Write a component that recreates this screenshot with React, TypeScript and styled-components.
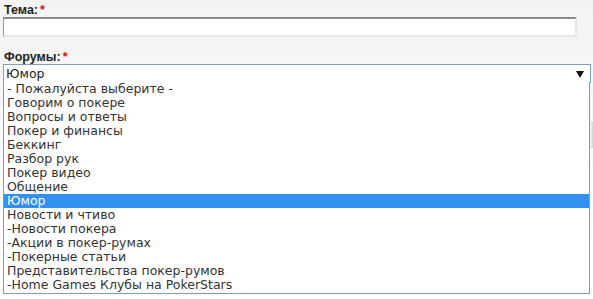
import styled, { createGlobalStyle } from "styled-components"

const GlobalStyle = createGlobalStyle`
  html, body {
    margin: 0;
    padding: 0;
  }
  body {
    width: 593px;
    height: 299px;
    overflow: hidden;
    background: linear-gradient(#f3f3f3, #fbfbfb 60%, #ffffff);
    font-family: "DejaVu Sans", Verdana, sans-serif;
  }
`

const Page = styled('div')`
  display: flex;
  flex-direction: column;
  padding: 3px 0 0 3px;
  width: 593px;
  height: 299px;
  box-sizing: border-box;
`

const Field = styled('div')`
  display: flex;
  flex-direction: column;
  margin-bottom: 13px;
`

const Label = styled('label')`
  font-family: "Liberation Sans", Tahoma, sans-serif;
  font-weight: bold;
  font-size: 12.5px;
  line-height: 14px;
  color: #222;
  padding-left: 1px;
`

const Required = styled('span')`
  color: #d21010;
  margin-left: 2px;
`

const TextInput = styled('div')`
  width: 574px;
  height: 20px;
  box-sizing: border-box;
  background: #fff;
  border-style: solid;
  border-width: 2px 2px 2px 1px;
  border-color: #8a8a8a #e6e6e6 #e6e6e6 #9a9a9a;
`

const SelectWrap = styled('div')`
  position: relative;
  width: 588px;
`

const SelectBox = styled('div')`
  display: flex;
  align-items: center;
  justify-content: space-between;
  height: 19px;
  box-sizing: border-box;
  border: 1px solid #7f9db9;
  background: #fff;
  padding: 0 6px 0 2px;
  font-size: 12.5px;
  color: #222;
`

const Arrow = styled('span')`
  width: 0;
  height: 0;
  border-left: 4px solid transparent;
  border-right: 4px solid transparent;
  border-top: 7px solid #111;
  margin-top: 1px;
`

const Listbox = styled('ul')`
  position: absolute;
  top: 18px;
  left: 0;
  width: 587px;
  margin: 0;
  padding: 0 0 1px;
  list-style: none;
  background: #fff;
  border: 1px solid #7f9db9;
  border-top: none;
  box-sizing: border-box;
  z-index: 2;
`

const Option = styled('li')<{ $selected?: boolean }>`
  height: 14px;
  line-height: 14px;
  padding-left: 3px;
  font-size: 12.5px;
  white-space: nowrap;
  color: ${p => (p.$selected ? "#fff" : "#333")};
  background: ${p => (p.$selected ? "#3390f0" : "transparent")};
`

const Toolbar = styled('div')`
  margin-top: 26px;
  height: 26px;
  box-sizing: border-box;
  background: #ececec;
  border: 1px solid #d8d8d8;
`

const options = [
  "- Пожалуйста выберите -",
  "Говорим о покере",
  "Вопросы и ответы",
  "Покер и финансы",
  "Беккинг",
  "Разбор рук",
  "Покер видео",
  "Общение",
  "Юмор",
  "Новости и чтиво",
  "-Новости покера",
  "-Акции в покер-румах",
  "-Покерные статьи",
  "Представительства покер-румов",
  "-Home Games Клубы на PokerStars",
]

const App = (): JSX.Element => {
  const selected = "Юмор"

  return (
    <Page>
      <GlobalStyle />

      <Field>
        <Label>Тема:<Required>*</Required></Label>
        <TextInput />
      </Field>

      <Field>
        <Label>Форумы:<Required>*</Required></Label>
        <SelectWrap>
          <SelectBox>
            <span>{selected}</span>
            <Arrow />
          </SelectBox>
          <Listbox>
            {options.map((o, i) => (
              <Option key={i} $selected={o === selected}>{o}</Option>
            ))}
          </Listbox>
        </SelectWrap>
      </Field>

      <Toolbar />
    </Page>
  )
}

export default App
